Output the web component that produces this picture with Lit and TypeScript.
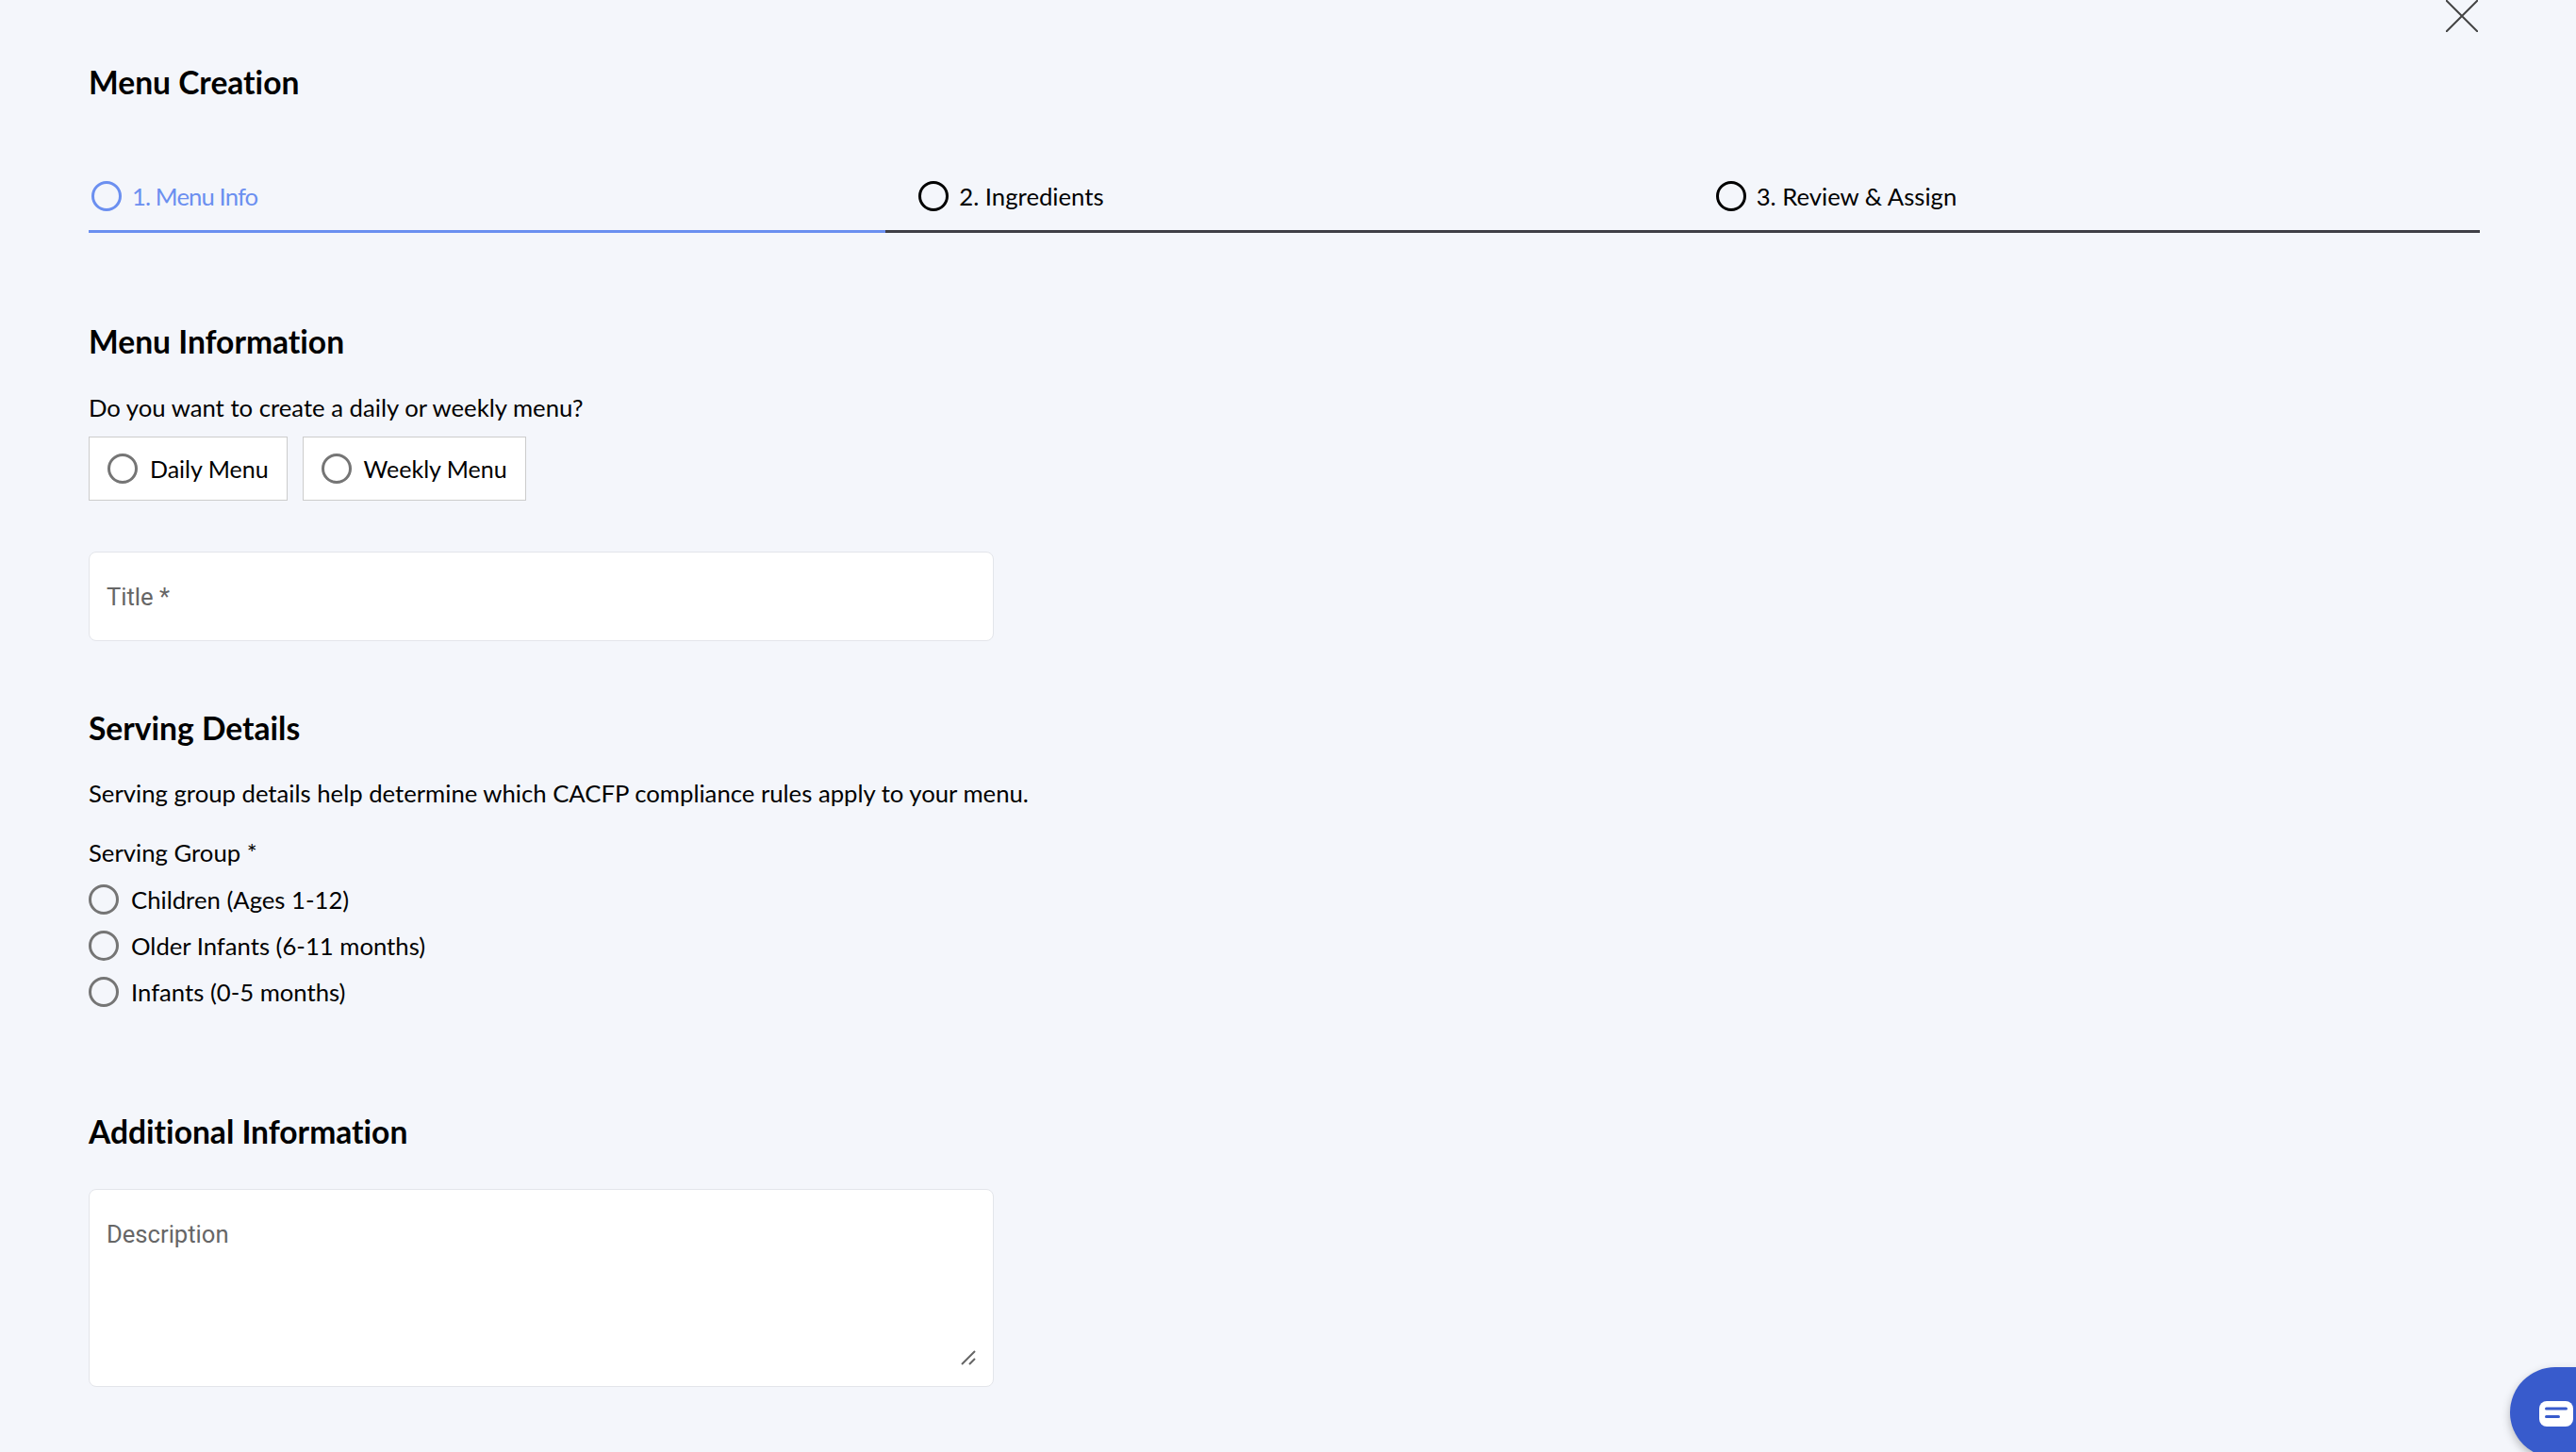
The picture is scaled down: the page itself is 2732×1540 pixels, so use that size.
import { LitElement, html, css } from "lit";
import { customElement } from "lit/decorators.js";

@customElement("app-root")
export class AppRoot extends LitElement {
  static styles = css`
    :host { display: block; position: relative; height: 1540px; overflow: hidden; background: #f4f6fb; color: #000; font-family: Lato, "Liberation Sans", sans-serif; font-size: 25.7px; font-variant-ligatures: none; }
    * { box-sizing: border-box; }
    .page { padding: 0 102px 0 94px; display: flex; flex-direction: column; align-items: stretch; }
    h1 { margin: 67px 0 0; height: 40px; line-height: 40px; font-size: 33.6px; font-weight: 700; }
    .tabs { display: grid; grid-template-columns: repeat(3, 1fr); margin-top: 85px; }
    .tab { height: 55px; border-bottom: 3px solid #3f3f46; display: flex; align-items: flex-start; gap: 11px; padding: 0 0 0 35px; line-height: 32px; }
    .tab.active { border-color: #6b8ff0; color: #6b8ff0; padding-left: 3px; letter-spacing: -0.9px; }
    .ring { width: 32px; height: 32px; border: 3.5px solid currentColor; border-radius: 50%; flex: none; }
    h2 { margin: 0; font-size: 33.6px; line-height: 40px; height: 40px; font-weight: 700; }
    .s1 { margin-top: 95px; }
    p { margin: 0; line-height: 32px; }
    .q { margin-top: 34px; }
    .choices { display: flex; gap: 16px; margin-top: 15px; }
    .choice { height: 68px; background: #fff; border: 1px solid #ccc; display: flex; align-items: center; gap: 13px; padding: 0 19px; font-size: 25px; }
    .radio { width: 32px; height: 32px; border: 3px solid #757575; border-radius: 50%; flex: none; }
    .field { width: 960px; background: #fff; border: 1px solid #e3e5ea; border-radius: 8px; font-family: Roboto, sans-serif; font-size: 25.6px; color: #666; padding: 0 18px; }
    .title { height: 95px; margin-top: 54px; display: flex; align-items: center; }
    .s2 { margin-top: 72px; }
    .hint { margin-top: 33px; }
    .group { margin-top: 31px; line-height: 32px; }
    .options { display: flex; flex-direction: column; gap: 17px; margin-top: 18px; }
    .option { display: flex; align-items: center; gap: 13px; line-height: 32px; height: 32px; }
    .s3 { margin-top: 112px; }
    .desc { position: relative; height: 210px; margin-top: 41px; padding-top: 32px; line-height: 30px; }
    .grip { position: absolute; right: 18px; bottom: 22px; width: 16px; height: 16px; }
    .close { position: absolute; left: 2594px; top: 0; width: 34px; height: 34px; }
    .chat { position: absolute; left: 2662px; top: 1450px; width: 110px; height: 96px; background: #385bcc; border-radius: 48px 0 0 48px; box-shadow: 0 4px 10px rgba(0,0,0,.25); }
    .chat svg { position: absolute; left: 31px; top: 36px; }
  `;

  render() {
    const opts = ["Children (Ages 1-12)", "Older Infants (6-11 months)", "Infants (0-5 months)"];
    return html`
      <div class="page">
        <h1>Menu Creation</h1>
        <div class="tabs">
          <div class="tab active"><span class="ring"></span><span>1. Menu Info</span></div>
          <div class="tab"><span class="ring"></span><span>2. Ingredients</span></div>
          <div class="tab"><span class="ring"></span><span>3. Review &amp; Assign</span></div>
        </div>
        <h2 class="s1">Menu Information</h2>
        <p class="q">Do you want to create a daily or weekly menu?</p>
        <div class="choices">
          <div class="choice"><span class="radio"></span><span>Daily Menu</span></div>
          <div class="choice"><span class="radio"></span><span>Weekly Menu</span></div>
        </div>
        <div class="field title">Title *</div>
        <h2 class="s2">Serving Details</h2>
        <p class="hint">Serving group details help determine which CACFP compliance rules apply to your menu.</p>
        <div class="group">Serving Group *</div>
        <div class="options">
          ${opts.map((o) => html`<div class="option"><span class="radio"></span><span>${o}</span></div>`)}
        </div>
        <h2 class="s3">Additional Information</h2>
        <div class="field desc">Description
          <svg class="grip" viewBox="0 0 16 16" fill="none" stroke="#666" stroke-width="2"><path d="M1 15L15 1M9 15L15 9"/></svg>
        </div>
      </div>
      <svg class="close" viewBox="0 0 34 34" fill="none" stroke="#444" stroke-width="2"><path d="M0 0L34 34M34 0L0 34"/></svg>
      <div class="chat">
        <svg width="36" height="27" viewBox="0 0 36 27"><rect width="36" height="27" rx="8" fill="#fff"/><rect x="6" y="6.5" width="24" height="3" rx="1.5" fill="#385bcc"/><rect x="6" y="15" width="16" height="3" rx="1.5" fill="#385bcc"/></svg>
      </div>
    `;
  }
}
